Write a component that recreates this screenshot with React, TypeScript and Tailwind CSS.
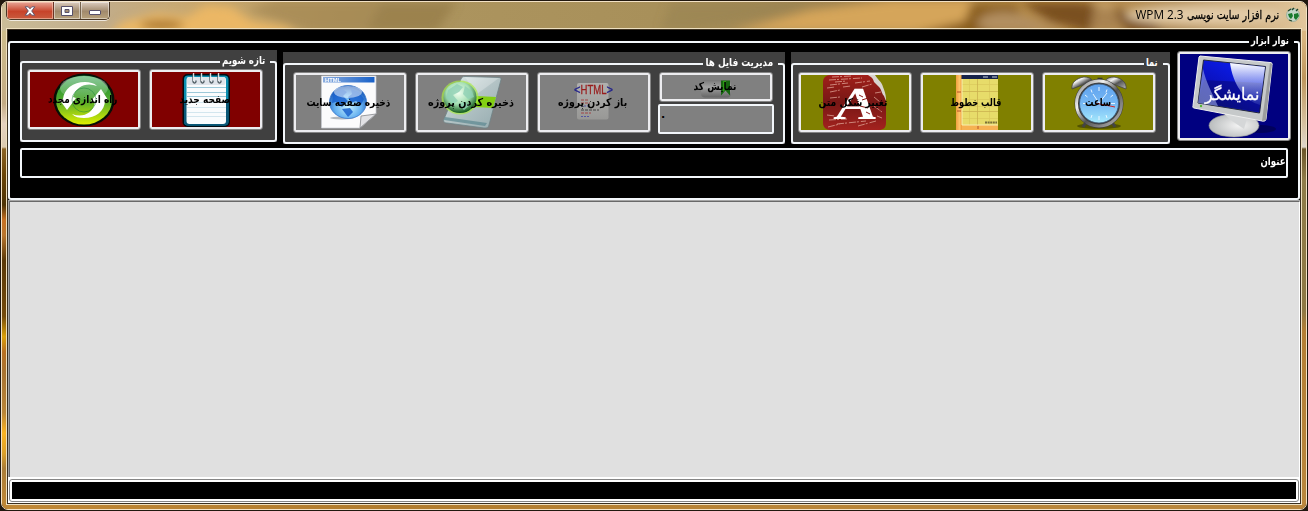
import React, { useLayoutEffect, useRef, useState } from 'react';

type FitProps = { text: string; width: number; className?: string };

/** A single line of text squeezed or stretched to a fixed width. */
function Fit({ text, width, className = '' }: FitProps) {
  const ref = useRef<HTMLSpanElement>(null);
  const [scale, setScale] = useState(1);
  useLayoutEffect(() => {
    if (ref.current) setScale(width / ref.current.offsetWidth);
  }, [width, text]);
  return (
    <span className="flex justify-center" style={{ width }} dir="ltr">
      <span
        ref={ref}
        dir="rtl"
        className={`shrink-0 whitespace-nowrap ${className}`}
        style={{ transform: `scaleX(${scale})` }}
      >
        {text}
      </span>
    </span>
  );
}

const boldFont = "font-['DejaVu_Sans',sans-serif] font-bold text-[11px] leading-[14px]";

type TileProps = {
  label: string;
  width: number;
  fill: string;
  size?: string;
  textClass?: string;
  nudge?: string;
  children: React.ReactNode;
};

function Tile({ label, width, fill, size = 'h-[61px]', textClass = `${boldFont} text-black`, nudge = 'pr-[3px]', children }: TileProps) {
  return (
    <button className={`w-[114px] shrink-0 rounded-[3px] border border-[#858585] ${size}`}>
      <span className={`grid h-full w-full place-items-center overflow-hidden rounded-[2px] border-2 border-[#ededf0] ${fill}`}>
        <span className="col-start-1 row-start-1 flex h-full w-full">{children}</span>
        <span className={`col-start-1 row-start-1 ${nudge}`}>
          <Fit text={label} width={width} className={textClass} />
        </span>
      </span>
    </button>
  );
}

type GroupProps = { title: string; titleWidth: number; className: string; inner: string; row: string; children: React.ReactNode };

function Group({ title, titleWidth, className, inner, row, children }: GroupProps) {
  return (
    <section className={`h-[92px] shrink-0 bg-[#404040] ${className}`}>
      <fieldset dir="rtl" className={`w-full rounded-[3px] border-2 border-[#f2f6fa] px-[5px] ${inner}`}>
        <legend className="h-[14px] pr-[5px] pl-0.5">
          <Fit text={title} width={titleWidth} className={`${boldFont} -mt-px text-white`} />
        </legend>
        <div dir="ltr" className={`flex items-start gap-2 ${row}`}>{children}</div>
      </fieldset>
    </section>
  );
}

function RefreshIcon() {
  return (
    <svg viewBox="0 0 108 55" className="h-full w-full">
      <defs>
        <linearGradient id="rg" x1="0" y1="0" x2="0" y2="1">
          <stop offset="0" stopColor="#17923a" />
          <stop offset=".5" stopColor="#4fa82c" />
          <stop offset="1" stopColor="#dff000" />
        </linearGradient>
        <linearGradient id="rs" x1="0" y1="0" x2="0" y2="1">
          <stop offset="0" stopColor="#fff" stopOpacity=".5" />
          <stop offset="1" stopColor="#fff" stopOpacity=".08" />
        </linearGradient>
      </defs>
      <ellipse cx="54" cy="28" rx="30.500" ry="26.500" fill="#061006" />
      <ellipse cx="54" cy="28" rx="28" ry="24.500" fill="url(#rg)" />
      <ellipse cx="54" cy="16" rx="24" ry="12" fill="url(#rs)" />
      <path d="M33 27c1-10 10-17 22-17 5 0 9 1 12 4-10-4-21 0-24 11l3 1-9 12-8-11z" fill="#fff" />
      <path d="M75 28c0 11-9 18-21 18-5 0-9-1-12-4 10 4 21 0 23-12l-4-1 10-12 7 11z" fill="#fff" />
      <ellipse cx="54" cy="28" rx="12" ry="12" fill="none" stroke="#15803a" strokeWidth=".8" opacity=".6" />
    </svg>
  );
}

function NotepadIcon() {
  return (
    <svg viewBox="0 0 108 55" className="h-full w-full">
      <rect x="30.500" y="2" width="47.500" height="53" rx="5" fill="#020c12" />
      <rect x="32" y="3.500" width="44.500" height="50" rx="4" fill="#0a8eb0" />
      <path d="M32 28h44.500v21.500a4 4 0 0 1-4 4H36a4 4 0 0 1-4-4z" fill="#0a5878" />
      <rect x="34.500" y="5" width="39.500" height="47" rx="3" fill="#fafcfd" />
      <rect x="35" y="5" width="38.500" height="8" rx="2" fill="#dfe4ea" />
      <path d="M35 15.500h39M35 20.500h39M35 24.500h39" stroke="#9cc8d8" strokeWidth="1" />
      <path d="M35 30.500h39M35 35.500h39M35 40.500h39M35 44.500h39" stroke="#d3e6ee" strokeWidth="1" />
      {[42, 50, 59, 67].map((x) => (
        <g key={x} fill="none">
          <path d={`M${x - 1} 1.500v8a1.500 1.500 0 0 0 3 0v-1`} stroke="#4b585f" strokeWidth="1.300" />
          <path d={`M${x - 0.3} 1v8`} stroke="#fff" strokeWidth="1" />
        </g>
      ))}
    </svg>
  );
}

function HtmlPageIcon() {
  return (
    <svg viewBox="0 0 108 55" className="h-full w-full">
      <defs>
        <radialGradient id="gb" cx=".5" cy=".65" r=".6">
          <stop offset="0" stopColor="#c8f2ff" />
          <stop offset=".6" stopColor="#64b0f0" />
          <stop offset="1" stopColor="#1656b8" />
        </radialGradient>
        <linearGradient id="hb" x1="0" x2="1">
          <stop offset="0" stopColor="#8caee0" />
          <stop offset="1" stopColor="#1760c8" />
        </linearGradient>
      </defs>
      <path d="M25.500 1H80v38L64 53H25.500z" fill="#fbfbfc" stroke="#c8ccd2" strokeWidth=".7" />
      <rect x="27" y="2" width="51.500" height="5.500" fill="url(#hb)" />
      <text x="29" y="7" fontFamily="Liberation Sans" fontWeight="700" fontSize="5.500" fill="#fff" textLength="16" lengthAdjust="spacingAndGlyphs">HTML</text>
      <ellipse cx="46" cy="43" rx="12" ry="1.500" fill="#b4b8bd" />
      <ellipse cx="52" cy="27" rx="18.500" ry="16.500" fill="url(#gb)" stroke="#3b79cc" strokeWidth=".8" />
      <path d="M37 19l9-5 5 3-4 4 5 5-6 6-6-5-4 1zM55 14l8 3 5 7-3 6-5-4-5 2-3-6 4-3zM46 34l8-1 3 4-5 5z" fill="#1a62ce" opacity=".85" />
      <ellipse cx="52" cy="17" rx="14" ry="6" fill="#fff" opacity=".5" />
      <path d="M64 53l1-12 15-2z" fill="#e2e2e5" stroke="#85888c" strokeWidth=".8" />
    </svg>
  );
}

function SaveProjectIcon() {
  return (
    <svg viewBox="0 0 108 55" className="h-full w-full">
      <defs>
        <linearGradient id="dv" x1="0" y1="0" x2="1" y2="1">
          <stop offset="0" stopColor="#e4eeee" />
          <stop offset=".5" stopColor="#b3c3c5" />
          <stop offset="1" stopColor="#94aaae" />
        </linearGradient>
        <radialGradient id="gg" cx=".45" cy=".35" r=".65">
          <stop offset="0" stopColor="#f2fff0" />
          <stop offset=".55" stopColor="#a5dfb4" />
          <stop offset="1" stopColor="#145c1c" />
        </radialGradient>
      </defs>
      <path d="M47 1.500l34 1c2 0 2 1 2 2L71 50c-1 3-2 3-5 3l-37-5c-3 0-4-2-3-4L43 4c1-2 2-2.500 4-2.500z" fill="url(#dv)" stroke="#6f8386" strokeWidth=".8" />
      <path d="M26 45l41 6 2-3-42-6z" fill="#5b8790" opacity=".7" />
      <path d="M47 2l34 1-22 16z" fill="#fff" opacity=".25" />
      <path d="M58 21l20 1-3 11-19-1z" fill="#83cf13" />
      <ellipse cx="42" cy="22.500" rx="18.500" ry="17" fill="#a8ea45" opacity=".7" />
      <ellipse cx="42" cy="22.500" rx="16.500" ry="15.500" fill="url(#gg)" />
      <path d="M30 15l9-6 6 3-4 5-6 3 5 6-5 3-7-6zM47 11l7 5 2 6-6 2-5-5zM40 29l7-2 5 3-6 5z" fill="#8fd0b4" opacity=".8" />
    </svg>
  );
}

function OpenProjectIcon() {
  return (
    <svg viewBox="0 0 108 55" className="h-full w-full">
      <defs>
        <linearGradient id="pp" x1="0" y1="0" x2="0" y2="1">
          <stop offset="0" stopColor="#b0b0ae" />
          <stop offset="1" stopColor="#989896" />
        </linearGradient>
      </defs>
      <rect x="37" y="8" width="31.500" height="36.500" rx="2" fill="url(#pp)" />
      <g fontFamily="Liberation Sans" fontSize="12" strokeWidth=".3">
        <text x="34" y="19" fill="#22228c" stroke="#22228c" textLength="6.500" lengthAdjust="spacingAndGlyphs">&lt;</text>
        <text x="40.500" y="19" fill="#981d1d" stroke="#981d1d" textLength="26" lengthAdjust="spacingAndGlyphs">HTML</text>
        <text x="66.500" y="19" fill="#22228c" stroke="#22228c" textLength="6.500" lengthAdjust="spacingAndGlyphs">&gt;</text>
      </g>
      <path d="M41 25h8M41 28h9M41 38h10" stroke="#a04545" strokeWidth="1" strokeDasharray="3 1" />
      <path d="M41 31h8M41 41.500h9" stroke="#5555a0" strokeWidth="1" strokeDasharray="2 1" />
      <path d="M41 35h18" stroke="#444" strokeWidth="1.200" strokeDasharray="3 1" />
    </svg>
  );
}

function CodeIcon() {
  return (
    <svg viewBox="0 0 108 24" className="h-full w-full">
      <defs>
        <linearGradient id="cd" x1="0" y1="0" x2="0" y2="1">
          <stop offset="0" stopColor="#777" />
          <stop offset=".4" stopColor="#a2a2a2" />
          <stop offset="1" stopColor="#656565" />
        </linearGradient>
      </defs>
      <rect x="39" y="5" width="30" height="17.500" rx="4" fill="url(#cd)" />
      <path d="M59 5.500h9v15l-4.500-5-4.500 5z" fill="#16660f" />
      <path d="M61 6h3v8l-3 3z" fill="#2e9c16" />
    </svg>
  );
}

function LetterIcon() {
  return (
    <svg viewBox="0 0 108 55" className="h-full w-full">
      <defs>
        <linearGradient id="rd" x1="0" y1="0" x2="0" y2="1">
          <stop offset="0" stopColor="#a11f1a" />
          <stop offset=".5" stopColor="#771715" />
          <stop offset="1" stopColor="#a3221e" />
        </linearGradient>
      </defs>
      <path d="M66 0h8c3 5 7 7 8 12 2 5 3 8 3 14L75 14z" fill="#d8d4cf" />
      <path d="M29 0h38c3 2 5 3 6 7l4 4c4 3 3 7 6 10l2 5v22c0 5-3 7-7 7H29c-4 0-7-3-7-7V7c0-4 3-7 7-7z" fill="url(#rd)" />
      <path d="M31 2l20-1M28 5l33-2M34 7l12-1M54 8l15-2M29 10l18-2M26 13l8-1M42 12l8-1M29 17l10-2M61 12l10-3M74 18l6-1M73 22l6 5M28 45l18-1M36 49l29-3M26 40l8 1M57 51l18-5M73 31l8 6M76 41l5 2M29 23l10-1M27 52l12-3" stroke="#e9b5a6" strokeWidth=".8" opacity=".85" fill="none" strokeDasharray="7 1 2 2" />
      <g transform="translate(32 43.500) skewX(-8)">
        <text x="0" y="0" fontFamily="Liberation Serif" fontWeight="700" fontSize="46" fill="#fff" textLength="43" lengthAdjust="spacingAndGlyphs">A</text>
      </g>
      <path d="M58 20l4 2M61 25l6-2M59 31l8 2M65 37l4 2" stroke="#8a1a17" strokeWidth="1" />
    </svg>
  );
}

function GridIcon() {
  return (
    <svg viewBox="0 0 108 55" className="h-full w-full">
      <defs>
        <linearGradient id="or" x1="0" x2="1">
          <stop offset="0" stopColor="#f0a040" />
          <stop offset=".6" stopColor="#ffc66a" />
          <stop offset="1" stopColor="#ee9a38" />
        </linearGradient>
      </defs>
      <rect x="33" y="0" width="42" height="55" fill="#f6b252" />
      <rect x="33" y="0" width="6" height="55" fill="url(#or)" />
      <rect x="39" y="0" width="36" height="50" fill="#e7dc6a" />
      <rect x="38.500" y="0" width="36.500" height="4" fill="#16234a" />
      <path d="M60 2h5M69 2h5" stroke="#8b95aa" strokeWidth="1.500" />
      <path d="M46.500 4v46M66.500 4v46M39 9.500h36M39 24.500h36M39 31.500h36M39 43.500h36" stroke="#dccb5e" strokeWidth=".8" />
      <path d="M54.500 4v46M39 16.500h36M39 36.500h36" stroke="#cbb350" strokeWidth=".8" />
      <path d="M39 4v46h36" fill="none" stroke="#f7efb0" strokeWidth="1" />
      <path d="M62 47.500h12" stroke="#7a7038" strokeWidth="1.800" strokeDasharray="2 .6" />
      <path d="M34 17h4M34 36h4M55 51v3" stroke="#b8552a" strokeWidth="1" />
    </svg>
  );
}

function ClockIcon() {
  return (
    <svg viewBox="0 0 108 55" className="h-full w-full">
      <defs>
        <linearGradient id="cf" x1="0" y1="0" x2="0" y2="1">
          <stop offset="0" stopColor="#5fa2ee" />
          <stop offset=".5" stopColor="#76b8f4" />
          <stop offset="1" stopColor="#a6eafc" />
        </linearGradient>
        <linearGradient id="mt" x1="0" y1="0" x2="1" y2="1">
          <stop offset="0" stopColor="#777" />
          <stop offset=".3" stopColor="#f1f1f1" />
          <stop offset=".55" stopColor="#555" />
          <stop offset="1" stopColor="#bbb" />
        </linearGradient>
      </defs>
      <ellipse cx="54" cy="51" rx="22" ry="3" fill="#000" opacity=".35" />
      <path d="M41 47l-3 5M67 47l3 5" stroke="#444" strokeWidth="3" />
      <path d="M54 3v7M52.500 3.500h5" stroke="#333" strokeWidth="1.500" />
      <path d="M27 14c-1-6 4-11 12-12 4 0 7 1 9 4z" fill="url(#mt)" stroke="#444" strokeWidth=".8" />
      <path d="M81 14c1-6-4-11-12-12-4 0-7 1-9 4z" fill="url(#mt)" stroke="#444" strokeWidth=".8" />
      <circle cx="54" cy="28.500" r="24.500" fill="#3d3d3d" />
      <circle cx="54" cy="28.500" r="22.500" fill="none" stroke="url(#mt)" strokeWidth="3" />
      <circle cx="54" cy="28.500" r="19.500" fill="url(#cf)" stroke="#3b5876" strokeWidth=".8" />
      <path d="M54 12v4M54 41v4M38 28.500h4M66 28.500h4M46 14.500l1 3M62 14.500l-1 3M40 20l2.500 2M68 20l-2.500 2M46 43l1-3M62 43l-1-3M54 28l8-10M54 28l-6-9" stroke="#e8f5ff" strokeWidth="1" />
      <path d="M50 28l20 4" stroke="#d12626" strokeWidth="1" />
    </svg>
  );
}

function MonitorIcon() {
  return (
    <svg viewBox="0 0 108 84" className="h-full w-full">
      <defs>
        <linearGradient id="sc" x1="0" y1="1" x2=".7" y2="0">
          <stop offset="0" stopColor="#0a1460" />
          <stop offset=".5" stopColor="#0b12c0" />
          <stop offset="1" stopColor="#0a20f5" />
        </linearGradient>
        <linearGradient id="gl" x1="0" y1="0" x2="0" y2="1">
          <stop offset="0" stopColor="#fff" />
          <stop offset="1" stopColor="#8fa4ee" stopOpacity=".15" />
        </linearGradient>
        <radialGradient id="st" cx=".6" cy=".5" r=".6">
          <stop offset="0" stopColor="#f4f4f4" />
          <stop offset="1" stopColor="#b9bcbd" />
        </radialGradient>
      </defs>
      <ellipse cx="80" cy="75" rx="16" ry="4" fill="#00005c" />
      <ellipse cx="54" cy="71.500" rx="25" ry="11.500" fill="url(#st)" stroke="#8c8f91" strokeWidth=".6" />
      <path d="M40 56l28 5-4 14-12-8z" fill="#d5d7d8" />
      <path d="M20 2l70 6.500c2 0 2.500 1 2 3L86 65c0 2-2 2.500-4 2L14 54c-1 0-1.500-1-1-2.500L19 3z" fill="#c6c9ca" stroke="#efefef" strokeWidth="1" />
      <path d="M90 9l2 1-6 56-4 1z" fill="#9b9d9e" />
      <path d="M23.500 6l62 6.500L79.500 59 18 49z" fill="url(#sc)" stroke="#24283e" strokeWidth="1" />
      <path d="M24 26l58 3-2 29-62-10z" fill="#060764" opacity=".45" />
      <path d="M50 9l35 4-5 38c-15-4-27-20-30-42z" fill="url(#gl)" />
      <path d="M23 15c3 13 9 24 15 37l-20-3z" fill="#a9b8ee" opacity=".55" />
      <circle cx="21" cy="52" r="1.200" fill="#54b832" />
    </svg>
  );
}

function GlobeIcon() {
  return (
    <svg viewBox="0 0 16 16" className="h-4 w-4">
      <circle cx="8" cy="8" r="6.500" fill="#c3d5c6" stroke="#8ea696" strokeWidth=".7" />
      <path d="M3 7l4-1 1 3-2 3-2-2zM9 7l4-1 1 3-3 4-2-2z" fill="#197a2c" />
      <path d="M3 4l3-2M7 3l2-2M11 4l2-2M4 13l3 1" stroke="#22452c" strokeWidth="1.300" />
    </svg>
  );
}

function GlassBackdrop() {
  return (
    <svg className="absolute inset-0 h-full w-full" viewBox="0 0 1306 509" preserveAspectRatio="none">
      <defs>
        <linearGradient id="tb" x1="0" x2="1">
          <stop offset="0" stopColor="#cbbd98" />
          <stop offset=".07" stopColor="#c1ad8c" />
          <stop offset=".15" stopColor="#c9a86e" />
          <stop offset=".3" stopColor="#ad955f" />
          <stop offset=".5" stopColor="#a8905a" />
          <stop offset=".64" stopColor="#a08450" />
          <stop offset=".8" stopColor="#b88b45" />
          <stop offset=".9" stopColor="#b4905c" />
          <stop offset="1" stopColor="#e2c79d" />
        </linearGradient>
        <linearGradient id="lf" x1="0" y1="0" x2="0" y2="1">
          <stop offset="0" stopColor="#d2c48e" />
          <stop offset=".2" stopColor="#c3ab84" />
          <stop offset=".24" stopColor="#e5d2c0" />
          <stop offset=".286" stopColor="#dccbb0" />
          <stop offset=".29" stopColor="#8c6425" />
          <stop offset=".34" stopColor="#6b4508" />
          <stop offset=".4" stopColor="#4d3205" />
          <stop offset=".43" stopColor="#c77022" />
          <stop offset=".46" stopColor="#b8752d" />
          <stop offset=".51" stopColor="#5a3807" />
          <stop offset=".62" stopColor="#744a0b" />
          <stop offset=".66" stopColor="#dba009" />
          <stop offset=".69" stopColor="#b87022" />
          <stop offset=".73" stopColor="#a87330" />
          <stop offset=".81" stopColor="#b98538" />
          <stop offset=".85" stopColor="#fab322" />
          <stop offset=".89" stopColor="#dba02a" />
          <stop offset=".92" stopColor="#aa7d37" />
          <stop offset="1" stopColor="#c08836" />
        </linearGradient>
        <linearGradient id="rt" x1="0" y1="0" x2="0" y2="1">
          <stop offset="0" stopColor="#e0bc88" />
          <stop offset=".07" stopColor="#d9b680" />
          <stop offset=".15" stopColor="#be965c" />
          <stop offset=".24" stopColor="#d6c1a0" />
          <stop offset=".286" stopColor="#ded6cb" />
          <stop offset=".29" stopColor="#6c5629" />
          <stop offset=".35" stopColor="#8f7c49" />
          <stop offset=".61" stopColor="#8e7844" />
          <stop offset=".65" stopColor="#b47e34" />
          <stop offset="1" stopColor="#b9873d" />
        </linearGradient>
        <linearGradient id="bt" x1="0" x2="1">
          <stop offset="0" stopColor="#c08836" />
          <stop offset=".3" stopColor="#b17c2e" />
          <stop offset=".6" stopColor="#b98538" />
          <stop offset="1" stopColor="#b9873d" />
        </linearGradient>
        <filter id="bl" x="-20%" y="-80%" width="140%" height="260%"><feGaussianBlur stdDeviation="5" /></filter>
        <clipPath id="bar"><rect width="1306" height="29" /></clipPath>
      </defs>
      <rect width="1306" height="509" fill="url(#bt)" />
      <rect width="10" height="509" fill="url(#lf)" />
      <rect x="1296" width="10" height="509" fill="url(#rt)" />
      <rect width="1306" height="29" fill="url(#tb)" />
      <g clipPath="url(#bar)">
        <g filter="url(#bl)">
          <path d="M105 35l15-15 35-9 30 4 20-12 25 2 20 14 35 6 20 15z" fill="#ebb765" />
          <ellipse cx="160" cy="23" rx="22" ry="5" fill="#a8752a" />
          <path d="M245 8l30-10h105l-15 32h-55z" fill="#a08450" opacity=".6" />
          <path d="M380 0h75l-20 30h-70z" fill="#947b47" opacity=".7" />
          <path d="M670 0h140v5l-120 23h-30z" fill="#978352" opacity=".6" />
          <path d="M730 30l80-22 80-10h80l30 32z" fill="#d5a55a" />
          <path d="M960 32l10-30h45l15 30z" fill="#8c6121" />
          <path d="M975 30c0-14 10-20 30-20s40 12 60 20z" fill="#b28f60" />
          <path d="M1020 0h60l60 12 30 20h-70l-50-12z" fill="#704716" opacity=".85" />
          <path d="M910 32l55-13 30 13zM1060 32l60-6 120 8z" fill="#855917" />
          <ellipse cx="1205" cy="13" rx="80" ry="10" fill="#e2cba7" />
          <path d="M1095 0h14l20 35h-40z" fill="#efcf9c" opacity=".4" />
        </g>
      </g>
    </svg>
  );
}

function CaptionButtons() {
  return (
    <div className="relative ml-1 flex h-[18px] w-[104px] overflow-hidden rounded-b-[5px] border border-t-0 border-[#4a3827] shadow-[0_1px_0_rgba(255,255,255,0.7)]">
      <span className="flex w-[47px] items-center justify-center border-r border-[#6b3426] bg-linear-to-b from-[#e6a596] from-0% via-[#c7432a] via-55% to-[#c95a3e] shadow-[inset_0_0_0_1px_rgba(255,220,200,0.5)]">
        <svg viewBox="0 0 12 10" className="h-[10px] w-3">
          <path d="M1.200 .8h3l1.800 2 1.800-2h3L7.700 5l3.100 4.200h-3L6 7.200l-1.800 2h-3L4.300 5z" fill="#fff" stroke="#57506a" strokeWidth=".9" />
        </svg>
      </span>
      <span className="flex w-[27px] items-center justify-center border-r border-[#75634d] bg-linear-to-b from-[#dccdc0] from-0% via-[#a18a6d] via-55% to-[#b8a27c] shadow-[inset_0_0_0_1px_rgba(255,255,255,0.45)]">
        <svg viewBox="0 0 12 10" className="h-[10px] w-3">
          <path d="M.5.500h11v9H.500zM4 3.500v3h4v-3z" fill="#fff" fillRule="evenodd" stroke="#57506a" strokeWidth="1" />
        </svg>
      </span>
      <span className="flex flex-1 items-center justify-center bg-linear-to-b from-[#dccdc0] from-0% via-[#a18a6d] via-55% to-[#b8a27c] pt-1 shadow-[inset_0_0_0_1px_rgba(255,255,255,0.45)]">
        <span className="h-[5px] w-3 rounded-[1px] border border-[#57506a] bg-white" />
      </span>
    </div>
  );
}

export default function App() {
  return (
    <div className="h-[511px] w-[1308px] overflow-hidden bg-[#21180f] p-px">
      <div className="relative flex h-[509px] w-[1306px] flex-col overflow-hidden rounded-[7px] border border-[#f3e2c6]">
        <GlassBackdrop />
        <header className="relative flex h-[26px] shrink-0 items-start justify-between">
          <CaptionButtons />
          <div dir="rtl" className="flex items-center pt-[5px] pr-[5px]">
            <GlobeIcon />
            <span className="mr-1.5 flex items-center gap-[3px] text-black">
              <Fit text="نرم افزار سایت نویسی" width={92} className="font-['DejaVu_Sans',sans-serif] text-[12px] leading-4 [-webkit-text-stroke:0.3px_black]" />
              <Fit text="WPM 2.3" width={48} className="font-['Open_Sans',sans-serif] text-[12px] leading-4" />
            </span>
          </div>
        </header>

        <div className="relative mx-1 h-[477px] border border-[#eee0c0]">
          <main className="flex h-[475px] flex-col border border-[#3a2f20] bg-black">
            <div className="h-[170px] shrink-0 bg-black pt-[5px]">
              <fieldset dir="rtl" className="h-[165px] w-full rounded-[3px] border-2 border-[#f2f6fa] px-1">
                <legend className="h-[14px] pr-[5px] pl-0.5">
                  <Fit text="نوار ابزار" width={38} className={`${boldFont} -mt-px text-white`} />
                </legend>
                <div dir="ltr" className="flex items-start pt-px pl-1.5">
                  <Group title="تازه شویم" titleWidth={43} className="w-[257px] pt-[5px]" inner="h-[87px]" row="">
                    <Tile label="راه اندازی مجدد" width={69} fill="bg-[#800000]"><RefreshIcon /></Tile>
                    <Tile label="صفحه جدید" width={51} fill="bg-[#800000]"><NotepadIcon /></Tile>
                  </Group>
                  <Group title="مدیریت فایل ها" titleWidth={68} className="mt-0.5 ml-1.5 w-[502px] pt-[5px]" inner="h-[87px]" row="pt-px pl-[3px]">
                    <Tile label="ذخیره صفحه سایت" width={84} fill="bg-[#808080]"><HtmlPageIcon /></Tile>
                    <Tile label="ذخیره کردن پروژه" width={86} fill="bg-[#808080]"><SaveProjectIcon /></Tile>
                    <Tile label="باز کردن پروژه" width={69} fill="bg-[#808080]"><OpenProjectIcon /></Tile>
                    <div className="-ml-px flex flex-col items-center gap-0.5">
                      <Tile label="نمایش کد" width={43} fill="bg-[#808080]" size="h-[30px]"><CodeIcon /></Tile>
                      <div dir="ltr" className={`h-[30px] w-[116px] rounded-[2px] border-2 border-[#f2f6fa] bg-[#808080] pt-0.5 pl-px text-black ${boldFont}`}>.</div>
                    </div>
                  </Group>
                  <Group title="نما" titleWidth={12} className="mt-0.5 ml-1.5 w-[379px] pt-[5px]" inner="h-[87px]" row="pt-px">
                    <Tile label="تغییر شکل متن" width={69} fill="bg-[#808000]"><LetterIcon /></Tile>
                    <Tile label="قالب خطوط" width={51} fill="bg-[#808000]"><GridIcon /></Tile>
                    <Tile label="ساعت" width={26} fill="bg-[#808000]" nudge="pr-px"><ClockIcon /></Tile>
                  </Group>
                  <div className="mt-px ml-[7px] flex">
                    <Tile
                      label="نمایشگر"
                      width={54}
                      fill="bg-[#000080]"
                      size="h-[90px]"
                      nudge="pr-[3px] pb-1"
                      textClass="font-['DejaVu_Sans',sans-serif] text-[17px] leading-5 text-white [-webkit-text-stroke:0.3px_white]"
                    >
                      <MonitorIcon />
                    </Tile>
                  </div>
                </div>
                <div className="mt-1 mr-1.5 flex h-[30px] w-[1268px] rounded-[2px] border-2 border-[#f2f6fa] bg-black pt-[5px]">
                  <Fit text="عنوان" width={25} className={`${boldFont} text-white`} />
                </div>
              </fieldset>
            </div>

            <div className="h-[277px] shrink-0 border-t border-l border-[#a6a6a6] bg-white">
              <div className="h-full border-t border-r border-l border-[#696969] border-r-white bg-[#e0e0e0]" />
            </div>

            <footer className="h-[26px] bg-white px-px pt-0.5 pb-px">
              <div className="h-[23px] rounded-[3px] border border-[#858585] p-0.5">
                <div className="h-full bg-black" />
              </div>
            </footer>
          </main>
        </div>
      </div>
    </div>
  );
}
